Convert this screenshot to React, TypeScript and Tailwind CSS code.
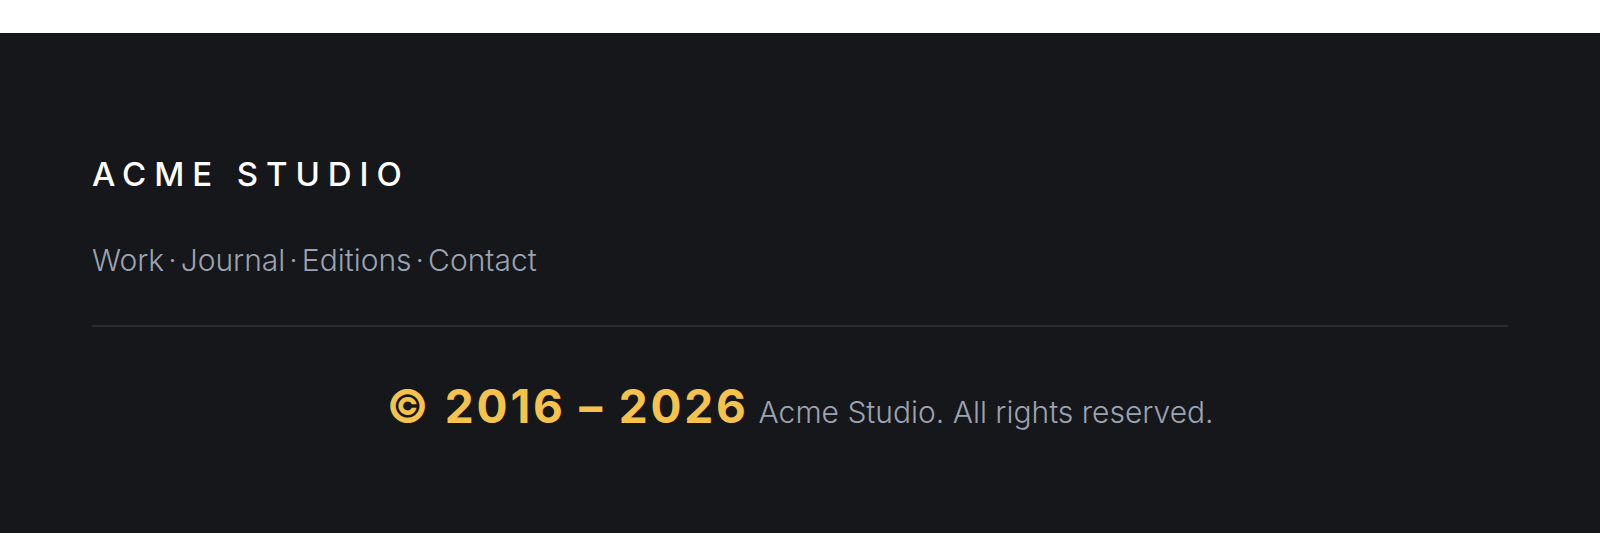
export default function App() {
  const links = ["Work", "Journal", "Editions", "Contact"];
  return (
    <div className="min-h-screen bg-white" style={{ fontFamily: "Inter, 'Noto Sans', sans-serif" }}>
      <div className="h-[33px] bg-white" />
      <footer className="bg-[#16171b] px-[92px] pt-[121px] pb-[102px]">
        <h2 className="text-[33px] leading-[40px] font-medium tracking-[0.24em] text-white">ACME STUDIO</h2>
        <nav className="mt-[48px] flex items-center text-[30px] leading-[36px] font-light text-[#9ba3b1]">
          {links.map((l, i) => (
            <span key={l} className="flex items-center">
              {i > 0 && <span className="px-[4px]">·</span>}
              <a href="#" className="hover:text-white">{l}</a>
            </span>
          ))}
        </nav>
        <div className="mt-[47px] h-[2px] bg-[#2a2b30]" />
        <p className="mt-[55px] flex items-baseline justify-center gap-[10px] leading-[48px]">
          <span className="text-[46px] font-bold tracking-[0.06em] text-[#f5c24c]">© 2016 – 2026</span>
          <span className="text-[30px] font-light text-[#9ba3b1]">Acme Studio. All rights reserved.</span>
        </p>
      </footer>
    </div>
  );
}
